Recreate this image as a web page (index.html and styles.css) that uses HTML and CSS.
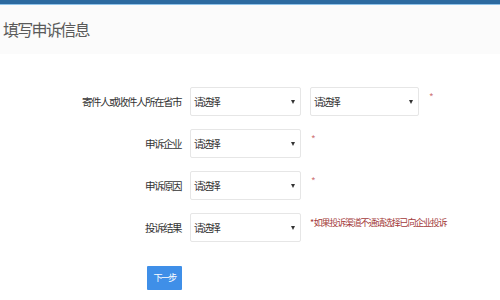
FILE: index.html
```html
<!DOCTYPE html>
<html lang="zh">
<head>
<meta charset="utf-8">
<link rel="stylesheet" href="styles.css">
</head>
<body>
<div class="topbar"></div>
<div class="title-area"><h1 class="title">填写申诉信息</h1></div>
<form class="form">
  <div class="row">
    <label class="label">寄件人或收件人所在省市</label>
    <div class="controls">
      <div class="select"><span>请选择</span><i class="arrow"></i></div>
      <div class="select second"><span>请选择</span><i class="arrow"></i></div>
      <span class="star">*</span>
    </div>
  </div>
  <div class="row">
    <label class="label">申诉企业</label>
    <div class="controls">
      <div class="select"><span>请选择</span><i class="arrow"></i></div>
      <span class="star">*</span>
    </div>
  </div>
  <div class="row">
    <label class="label">申诉原因</label>
    <div class="controls">
      <div class="select"><span>请选择</span><i class="arrow"></i></div>
      <span class="star">*</span>
    </div>
  </div>
  <div class="row">
    <label class="label">投诉结果</label>
    <div class="controls">
      <div class="select"><span>请选择</span><i class="arrow"></i></div>
      <span class="note">* 如果投诉渠道不通请选择已向企业投诉</span>
    </div>
  </div>
  <div class="actions">
    <button type="button" class="btn">下一步</button>
  </div>
</form>
</body>
</html>
```
FILE: styles.css
```css
* { box-sizing: border-box; }
html, body { margin: 0; padding: 0; }
body {
  width: 500px;
  height: 300px;
  overflow: hidden;
  background: #fff;
  font-family: "Noto Sans CJK SC", "Noto Sans", sans-serif;
  color: #333;
}
.topbar {
  height: 5px;
  background: #2c6aa0;
  border-bottom: 1px solid #8fc3ea;
}
.title-area {
  height: 49px;
  background: #fbfbfb;
  padding: 14px 0 0 3px;
}
.title {
  margin: 0;
  font-size: 16px;
  font-weight: normal;
  letter-spacing: -1.7px;
  line-height: 20px;
  color: #5a5a5a;
}
.form {
  padding-top: 33px;
}
.row {
  display: grid;
  grid-template-columns: 181px 1fr;
  column-gap: 9px;
  align-items: center;
  height: 29px;
  margin-bottom: 13px;
}
.label {
  text-align: right;
  font-size: 10.5px;
  letter-spacing: -1.5px;
  color: #333;
}
.controls {
  display: flex;
  align-items: center;
}
.select {
  width: 111px;
  height: 29px;
  border: 1px solid #e6e6e6;
  border-radius: 2px;
  background: #fff;
  display: flex;
  align-items: center;
  justify-content: space-between;
  padding: 0 5px 0 3px;
  font-size: 10px;
  letter-spacing: -1.6px;
  color: #333;
}
.select.second {
  margin-left: 9px;
  width: 109px;
}
.arrow {
  width: 0;
  height: 0;
  border-left: 2px solid transparent;
  border-right: 2px solid transparent;
  border-top: 4px solid #333;
}
.star {
  color: #d07a7a;
  font-size: 10px;
  margin-left: 10px;
  margin-top: 3px;
  align-self: flex-start;
  line-height: 14px;
}
.note {
  color: #a33a3a;
  font-size: 9px;
  letter-spacing: -1.2px;
  margin-left: 9px;
  margin-top: 3px;
  align-self: flex-start;
  line-height: 14px;
}
.actions {
  padding: 7px 0 0 147px;
}
.btn {
  width: 35px;
  height: 24px;
  border: none;
  border-radius: 1px;
  background: #3f8fe8;
  color: #fff;
  font-family: "Noto Sans CJK SC", sans-serif;
  font-size: 9px;
  letter-spacing: -1.6px;
  padding: 0;
}
```
